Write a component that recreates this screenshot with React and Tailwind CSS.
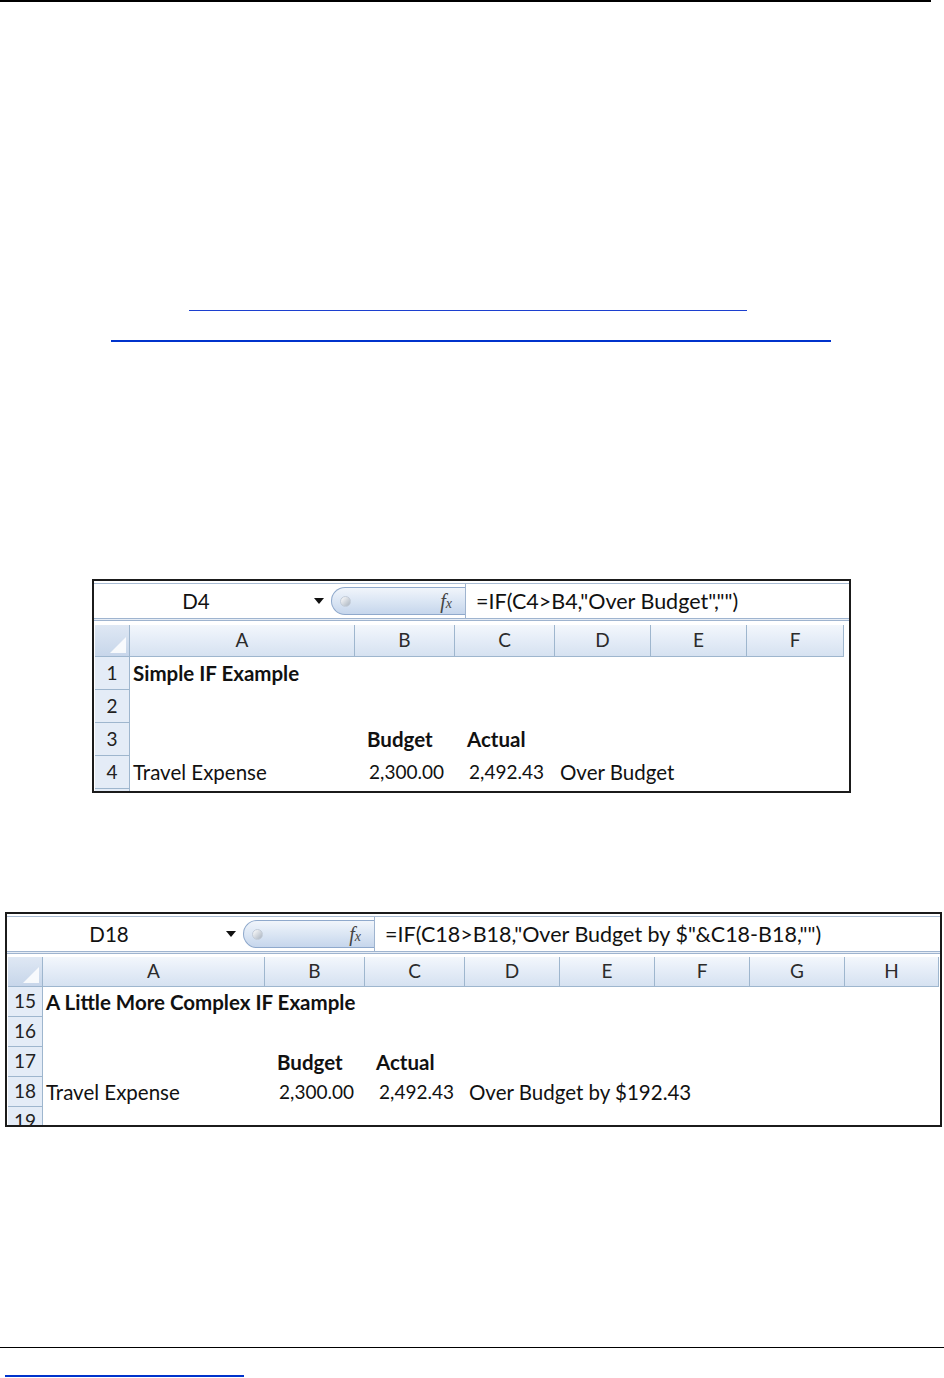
import React from "react";

const FONT = { fontFamily: "Lato, 'Open Sans', sans-serif" };

function FormulaBar({ nameW, name, pillW, formula }) {
  return (
    <div className="flex flex-col">
      <div className="h-[2px]" />
      <div className="h-px bg-[#a9bcd3]" />
      <div className="flex h-[34px] items-center bg-white">
        <div className="relative flex h-full items-center" style={{ width: nameW }}>
          <span className="w-[204px] text-center text-[20.5px] text-[#111]">{name}</span>
          <span className="flex-1" />
          <svg width="12" height="8" viewBox="0 0 12 8" className="mr-[6px]">
            <polygon points="1,1 11,1 6,7" fill="#111" />
          </svg>
        </div>
        <div
          className="relative flex h-[28px] items-center justify-end rounded-l-full border border-r-0 border-[#8fa9cc] bg-gradient-to-b from-[#f1f5fb] via-[#dbe6f4] to-[#c6d6ec]"
          style={{ width: pillW }}
        >
          <div className="absolute left-[8px] top-[8px] h-[11px] w-[11px] rounded-full bg-gradient-to-br from-[#ffffff] to-[#a9b3bf] border border-[#c3ccd8]" />
          <span
            className="mr-[13px] text-[20px] italic text-[#444]"
            style={{ fontFamily: "'Liberation Serif', serif" }}
          >
            f<span className="text-[14px]">x</span>
          </span>
        </div>
        <div className="h-full w-px bg-[#9fb4cf]" />
        <span className="pl-[10px] text-[21.5px] text-[#111] whitespace-pre">{formula}</span>
      </div>
      <div className="h-px bg-[#9fb4cf]" />
      <div className="h-px bg-[#e6edf6]" />
      <div className="h-px bg-[#9fb4cf]" />
    </div>
  );
}

function Sheet({ widthPx, heightPx, nameW, name, pillW, formula, cols, headerH, rowH, rows, gap }) {
  return (
    <div
      className="overflow-hidden border-2 border-[#1b1b1b] bg-white"
      style={{ width: widthPx, height: heightPx, ...FONT }}
    >
      <FormulaBar nameW={nameW} name={name} pillW={pillW} formula={formula} />
      <div style={{ height: gap }} />
      <div className="flex pl-[1px]">
        <div className="flex flex-col">
          <div className="flex" style={{ height: headerH }}>
            <div
              className="relative border-r border-b border-[#9eb6ce] bg-gradient-to-b from-[#dfe8f4] to-[#c7d6ea]"
              style={{ width: 35 }}
            >
              <svg className="absolute right-[3px] bottom-[3px]" width="16" height="16" viewBox="0 0 16 16">
                <polygon points="16,0 16,16 0,16" fill="#ffffff" opacity="0.85" />
              </svg>
            </div>
            {cols.map((c) => (
              <div
                key={c.l}
                className="flex items-center justify-center border-r border-b border-[#9eb6ce] bg-gradient-to-b from-[#f3f7fc] via-[#e4ecf7] to-[#d6e2f1] text-[19px] text-[#2b2b2b]"
                style={{ width: c.w }}
              >
                {c.l}
              </div>
            ))}
          </div>
          {rows.map((r, ri) => (
            <div key={ri} className="flex" style={{ height: rowH }}>
              <div
                className="flex shrink-0 items-center justify-center border-r border-b border-[#9eb6ce] bg-[#e4ecf7] text-[19px] text-[#222]"
                style={{ width: 35 }}
              >
                {r.n}
              </div>
              {cols.map((c, i) => {
                const cell = r.cells && r.cells[i];
                return (
                  <div
                    key={c.l}
                    className={
                      "relative flex items-center overflow-visible text-[#111] whitespace-nowrap " +
                      (cell && cell.s ? "text-[19px] " : "text-[20.5px] ") +
                      (cell && cell.b ? "font-bold " : "") +
                      (cell && cell.r ? "justify-end " : "")
                    }
                    style={{ width: c.w, paddingLeft: cell && cell.pl != null ? cell.pl : 3, paddingRight: cell && cell.pr != null ? cell.pr : 0 }}
                  >
                    {cell ? cell.t : ""}
                  </div>
                );
              })}
            </div>
          ))}
        </div>
      </div>
    </div>
  );
}

export default function App() {
  const cols1 = [
    { l: "A", w: 225 },
    { l: "B", w: 100 },
    { l: "C", w: 100 },
    { l: "D", w: 96 },
    { l: "E", w: 96 },
    { l: "F", w: 97 },
  ];
  const rows1 = [
    { n: "1", cells: [{ t: "Simple IF Example", b: true }] },
    { n: "2" },
    { n: "3", cells: [null, { t: "Budget", b: true, pl: 12 }, { t: "Actual", b: true, pl: 12 }] },
    {
      n: "4",
      cells: [
        { t: "Travel Expense" },
        { t: "2,300.00", r: true, pr: 11, s: true },
        { t: "2,492.43", r: true, pr: 11, s: true },
        { t: "Over Budget", pl: 5 },
      ],
    },
    { n: "" },
  ];
  const cols2 = [
    { l: "A", w: 222 },
    { l: "B", w: 100 },
    { l: "C", w: 100 },
    { l: "D", w: 95 },
    { l: "E", w: 95 },
    { l: "F", w: 95 },
    { l: "G", w: 95 },
    { l: "H", w: 94 },
  ];
  const rows2 = [
    { n: "15", cells: [{ t: "A Little More Complex IF Example", b: true }] },
    { n: "16" },
    { n: "17", cells: [null, { t: "Budget", b: true, pl: 12 }, { t: "Actual", b: true, pl: 11 }] },
    {
      n: "18",
      cells: [
        { t: "Travel Expense" },
        { t: "2,300.00", r: true, pr: 11, s: true },
        { t: "2,492.43", r: true, pr: 11, s: true },
        { t: "Over Budget by $192.43", pl: 4 },
      ],
    },
    { n: "19" },
  ];

  return (
    <div className="relative h-[1378px] w-[944px] overflow-hidden bg-white">
      <div className="h-[2px] w-[931px] bg-black" />
      <div className="ml-[189px] mt-[308px] h-px w-[558px] bg-[#1c3fcf]" />
      <div className="ml-[111px] mt-[29px] h-[2px] w-[720px] bg-[#0033cc]" />
      <div className="ml-[92px] mt-[237px]">
        <Sheet
          widthPx={759}
          heightPx={214}
          nameW={237}
          name="D4"
          pillW={134}
          formula={'=IF(C4>B4,"Over Budget","")'}
          cols={cols1}
          headerH={32}
          rowH={33}
          rows={rows1}
          gap={4}
        />
      </div>
      <div className="ml-[5px] mt-[119px]">
        <Sheet
          widthPx={937}
          heightPx={215}
          nameW={236}
          name="D18"
          pillW={131}
          formula={'=IF(C18>B18,"Over Budget by $"&C18-B18,"")'}
          cols={cols2}
          headerH={30}
          rowH={30}
          rows={rows2}
          gap={3}
        />
      </div>
      <div className="mt-[220px] h-px w-full bg-black" />
      <div className="ml-[5px] mt-[27px] h-[2px] w-[239px] bg-[#0033cc]" />
    </div>
  );
}
